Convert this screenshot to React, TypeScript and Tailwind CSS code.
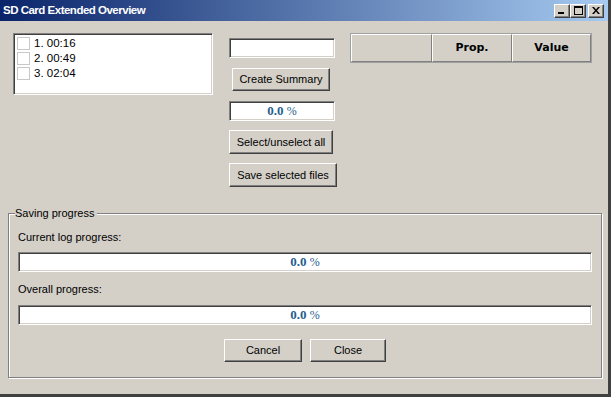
import React from "react";

const raised =
  "bg-[#d4d0c8] border border-t-white border-l-white border-r-[#404040] border-b-[#404040] shadow-[inset_-1px_-1px_0_#808080]";
const sunken =
  "bg-white border border-t-[#808080] border-l-[#808080] border-r-white border-b-white shadow-[inset_1px_1px_0_#404040,inset_-1px_-1px_0_#d4d0c8]";

function Btn({ children, className = "" }: { children: React.ReactNode; className?: string }) {
  return (
    <div className={`${raised} flex items-center justify-center text-[11px] text-black ${className}`}>
      {children}
    </div>
  );
}

function Pct({ className = "" }: { className?: string }) {
  return (
    <div className={`${sunken} flex items-center justify-center ${className}`}>
      <span className="text-[13px] font-bold text-[#1f5f8f] [font-family:'Liberation_Serif',serif]">
        0.0 <span className="font-normal text-[12px]">%</span>
      </span>
    </div>
  );
}

function TitleBtn({ children }: { children: React.ReactNode }) {
  return (
    <div className={`${raised} w-[16px] h-[14px] flex items-center justify-center text-black`}>
      {children}
    </div>
  );
}

export default function App() {
  const items = ["1. 00:16", "2. 00:49", "3. 02:04"];
  return (
    <div className="w-[611px] h-[397px] bg-[#d4d0c8] flex flex-col border-r-[3px] border-b-[3px] border-r-[#404040] border-b-[#404040] [font-family:'Liberation_Sans',Arial,sans-serif] text-[11px] text-black overflow-hidden">
      <div className="h-[21px] shrink-0 flex items-center pl-[3px] pr-[4px] bg-[linear-gradient(90deg,#0a246a,#a6caf0)]">
        <span className="text-white font-bold text-[11.5px] tracking-[-0.5px] leading-none">SD Card Extended Overview</span>
        <div className="ml-auto flex items-center">
          <TitleBtn>
            <svg width="8" height="7" viewBox="0 0 8 7"><rect x="0" y="5" width="6" height="2" fill="#000" /></svg>
          </TitleBtn>
          <TitleBtn>
            <svg width="9" height="9" viewBox="0 0 9 9"><rect x="0.5" y="0.5" width="8" height="8" fill="none" stroke="#000" /><rect x="0" y="0" width="9" height="2" fill="#000" /></svg>
          </TitleBtn>
          <div className="w-[2px]" />
          <TitleBtn>
            <svg width="8" height="7" viewBox="0 0 8 7">
              <path d="M0 0h2l2 2.5L6 0h2L5 3.5 8 7H6L4 4.5 2 7H0l3-3.5z" fill="#000" />
            </svg>
          </TitleBtn>
        </div>
      </div>

      <div className="flex items-start pt-[12px] pl-[13px] h-[154px] shrink-0 box-content">
        <div className={`${sunken} w-[200px] h-[62px] pt-[2px] pl-[3px] flex flex-col`}>
          {items.map((t) => (
            <div key={t} className="flex items-center h-[15px]">
              <div className="w-[13px] h-[13px] border border-[#c8c8c8] bg-white" />
              <span className="ml-[4px] text-[11.5px] leading-none">{t}</span>
            </div>
          ))}
        </div>

        <div className="ml-[16px] w-[108px] flex flex-col items-start">
          <div className={`${sunken} w-[106px] h-[20px] mt-[5px]`} />
          <Btn className="w-[98px] h-[23px] mt-[10px] ml-[3px]">Create Summary</Btn>
          <Pct className="w-[106px] h-[20px] mt-[10px]" />
          <Btn className="w-[104px] h-[24px] mt-[9px]">Select/unselect all</Btn>
          <Btn className="w-[108px] h-[24px] mt-[9px]">Save selected files</Btn>
        </div>

        <div className="ml-[13px] w-[242px] h-[30px] border border-[#a0a0a0] flex">
          <div className={`${raised} shadow-none border-r-[#808080] border-b-[#808080] w-[81px]`} />
          <div className={`${raised} shadow-none border-r-[#808080] border-b-[#808080] w-[80px] flex items-center justify-center font-bold [font-family:'DejaVu_Sans',sans-serif] text-[11px]`}>
            Prop.
          </div>
          <div className={`${raised} shadow-none border-r-[#808080] border-b-[#808080] flex-1 flex items-center justify-center font-bold [font-family:'DejaVu_Sans',sans-serif] text-[11px]`}>
            Value
          </div>
        </div>
      </div>

      <div className="relative mt-[26px] ml-[8px] w-[594px] h-[165px] border border-[#808080] shadow-[1px_1px_0_#fff,inset_1px_1px_0_#fff] flex flex-col px-[9px]">
        <span className="absolute -top-[7px] left-[6px] bg-[#d4d0c8] pr-[2px] leading-[13px]">Saving progress</span>
        <div className="mt-[17px] leading-[13px]">Current log progress:</div>
        <Pct className="mt-[8px] h-[20px] w-[574px]" />
        <div className="mt-[11px] leading-[13px]">Overall progress:</div>
        <Pct className="mt-[9px] h-[20px] w-[574px]" />
        <div className="mt-[14px] flex justify-center gap-[8px]">
          <Btn className="w-[78px] h-[23px]">Cancel</Btn>
          <Btn className="w-[76px] h-[23px]">Close</Btn>
        </div>
      </div>
    </div>
  );
}
